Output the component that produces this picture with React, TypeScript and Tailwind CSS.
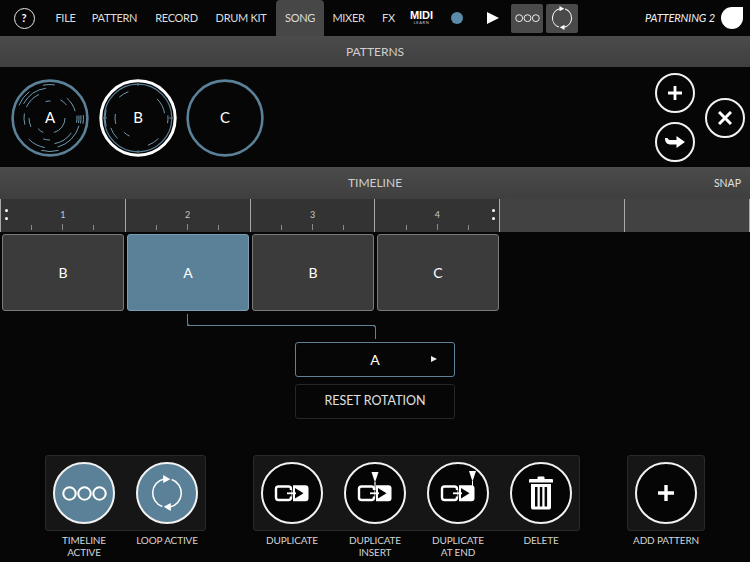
import React from "react";

const BLUE = "#5a8198";

function arc(r: number, a0: number, a1: number) {
  const p = (a: number) => {
    const t = ((a - 90) * Math.PI) / 180;
    return `${(r * Math.cos(t)).toFixed(2)} ${(r * Math.sin(t)).toFixed(2)}`;
  };
  return `M${p(a0)}A${r} ${r} 0 ${a1 - a0 > 180 ? 1 : 0} 1 ${p(a1)}`;
}

const arcsA: [number, number, number][] = [
  [33.5, -12, 8], [33.5, 85, 100], [33.5, 165, 195], [33.5, -68, -38],
  [31, 85, 100], [29, 85, 100], [27, 85, 100],
  [30, -62, -8], [30, 105, 165], [30, 190, 225],
  [26, -65, -25], [26, 40, 75], [26, 125, 170], [26, 255, 280],
  [21, 30, 52], [21, 245, 270], [22, 180, 198],
  [17, -15, 2], [15, 90, 165], [16, 205, 228],
];
const arcsB: [number, number, number][] = [
  [28, -42, -20], [27, 45, 80], [23, -105, -80], [33, -105, -75],
  [29, 225, 250], [20, 205, 225], [29, 135, 160], [30, 85, 100],
];

function PatternCircle({ label, variant }: { label: string; variant: "a" | "b" | "c" }) {
  const arcs = variant === "a" ? arcsA : variant === "b" ? arcsB : [];
  return (
    <div className="relative w-[78px] h-[78px] flex items-center justify-center text-white text-[15px]">
      <svg viewBox="-39 -39 78 78" className="absolute inset-0 w-full h-full" fill="none">
        {variant === "b" ? (
          <>
            <circle r="33.8" stroke={BLUE} strokeWidth="1.2" />
            <circle r="37.2" stroke="#fff" strokeWidth="3" />
            <path d="M0 -35V-32M0 32V35M-35 0H-31M31 0H35" stroke={BLUE} strokeWidth="1" />
          </>
        ) : (
          <circle r="37.4" stroke={BLUE} strokeWidth="2.6" />
        )}
        {arcs.map(([r, a, b], i) => (
          <path key={i} d={arc(r, a, b)} stroke="#6f97ad" strokeWidth="1" />
        ))}
      </svg>
      <span className="relative">{label}</span>
    </div>
  );
}

function LoopGlyph({ size, sw = 1.6 }: { size: number; sw?: number }) {
  return (
    <svg viewBox="-19 -19 38 38" width={size} height={size} fill="none">
      <path d="M-5 14.2A15 15 0 0 1 -3 -14.7" stroke="#fff" strokeWidth={sw} />
      <path d="M5 -14.2A15 15 0 0 1 3 14.7" stroke="#fff" strokeWidth={sw} />
      <path d="M-4 -19L3.5 -14.6L-4 -10.5Z" fill="#fff" />
      <path d="M4 19L-3.5 14.6L4 10.5Z" fill="#fff" />
    </svg>
  );
}

function RingsGlyph({ w, sw }: { w: number; sw: number }) {
  return (
    <svg viewBox="0 0 42 14" width={w} fill="none" stroke="#fff" strokeWidth={sw}>
      <circle cx="7" cy="7" r="5.8" />
      <circle cx="21" cy="7" r="5.8" />
      <circle cx="35" cy="7" r="5.8" />
    </svg>
  );
}

function DupGlyph({ mark }: { mark?: "insert" | "end" }) {
  return (
    <svg viewBox="-22 -22 44 44" width="44" height="44" fill="none">
      <rect x="-16" y="-6.5" width="15" height="13.5" rx="2.5" stroke="#fff" strokeWidth="2.4" />
      <path d="M1 -7.7H13.5a3 3 0 0 1 3 3V5.2a3 3 0 0 1 -3 3H1Z" fill="#fff" />
      <path d="M-3.5 -3H-.5V3.5H-3.5Z" fill="#050505" />
      <path d="M3 -5L11.5 0.3L3 5.5Z" fill="#050505" />
      <path d="M-5 .3H4" stroke="#fff" strokeWidth="1.8" />
      {mark === "insert" && (
        <>
          <path d="M-3.5 -21H3.5L0 -10.5Z" fill="#fff" />
          <path d="M0 -11V-3" stroke="#fff" strokeWidth="1.2" />
        </>
      )}
      {mark === "end" && (
        <>
          <path d="M11 -22H18L14.5 -11.5Z" fill="#fff" />
          <path d="M14.5 -12V-7" stroke="#fff" strokeWidth="1" />
        </>
      )}
    </svg>
  );
}

function TrashGlyph() {
  return (
    <svg viewBox="0 0 24 34" width="24" height="34">
      <path d="M8.5 3V1.3A1 1 0 0 1 9.5 .5H14.5A1 1 0 0 1 15.5 1.3V3H23A1 1 0 0 1 24 4V6.5H0V4A1 1 0 0 1 1 3Z" fill="#fff" />
      <path fillRule="evenodd" d="M2 8H22V31.5A2 2 0 0 1 20 33.5H4A2 2 0 0 1 2 31.5ZM6 11V30.5H8.5V11ZM10.8 11V30.5H13.3V11ZM15.6 11V30.5H18.1V11Z" fill="#fff" />
    </svg>
  );
}

function Plus({ size, sw }: { size: number; sw: number }) {
  return (
    <svg viewBox="0 0 16 16" width={size} height={size} stroke="#fff" strokeWidth={sw}>
      <path d="M8 0V16M0 8H16" />
    </svg>
  );
}

function RoundBtn({ children, active }: { children: React.ReactNode; active?: boolean }) {
  return (
    <div
      className={`w-[62px] h-[62px] rounded-full border-2 border-[#f2f2f2] flex items-center justify-center ${
        active ? "bg-[#5a8198]" : "bg-[#050505]"
      }`}
    >
      {children}
    </div>
  );
}

function SmallBtn({ children }: { children: React.ReactNode }) {
  return (
    <div className="w-[40px] h-[40px] rounded-full border-2 border-[#f2f2f2] flex items-center justify-center">
      {children}
    </div>
  );
}

function Group({ items }: { items: { icon: React.ReactNode; label: string[]; active?: boolean }[] }) {
  return (
    <div className="flex flex-col">
      <div className="flex gap-[21px] h-[76px] items-center pl-[7px] pr-[7px] bg-[#161616] border border-[#2a2a2a] rounded-[3px] box-border">
        {items.map((it, i) => (
          <RoundBtn key={i} active={it.active}>
            {it.icon}
          </RoundBtn>
        ))}
      </div>
      <div className="flex gap-[21px] pl-[8px] pt-[3px]">
        {items.map((it, i) => (
          <div key={i} className="w-[62px] flex flex-col items-center text-[10px] tracking-[-0.15px] leading-[12px] text-[#d4d4d4] whitespace-nowrap">
            {it.label.map((l) => (
              <span key={l}>{l}</span>
            ))}
          </div>
        ))}
      </div>
    </div>
  );
}

function MenuItem({ w, children, active }: { w: string; children: React.ReactNode; active?: boolean }) {
  return (
    <div className={`${w} h-[36px] flex items-center justify-center ${active ? "bg-[#474747] rounded-t-[4px]" : ""}`}>
      {children}
    </div>
  );
}

function RulerCell({ n, dots }: { n?: number; dots?: "l" | "r" }) {
  return (
    <div
      className={`relative w-[125px] h-[33px] box-border border-l border-[#a8a8a8] flex flex-col items-center ${
        n ? "bg-[#333333]" : "bg-[#424242]"
      }`}
    >
      {n && (
        <>
          <span className="text-[9px] leading-[10px] mt-[11px] text-[#c8c8c8]">{n}</span>
          <div className="flex justify-between items-end w-[63px] h-[6px] mt-[4px]">
            <i className="w-px h-[5px] bg-[#8a8a8a]" />
            <i className="w-px h-[6px] bg-[#8a8a8a]" />
            <i className="w-px h-[5px] bg-[#8a8a8a]" />
          </div>
        </>
      )}
      {dots && (
        <div className={`absolute top-[10px] flex flex-col gap-[5px] ${dots === "l" ? "left-[4px]" : "right-[4px]"}`}>
          <i className="w-[3px] h-[3px] rounded-full bg-white" />
          <i className="w-[3px] h-[3px] rounded-full bg-white" />
        </div>
      )}
    </div>
  );
}

function Clip({ label, active }: { label: string; active?: boolean }) {
  return (
    <div
      className={`w-[122px] h-[77px] rounded-[3px] border flex items-center justify-center text-white text-[14px] box-border ${
        active ? "bg-[#5a8198] border-[#7d9db0]" : "bg-[#3b3b3b] border-[#7a7a7a]"
      }`}
    >
      {label}
    </div>
  );
}

function SectionBar({ children, side, h }: { children: string; side?: string; h: string }) {
  return (
    <div className={`${h} shrink-0 flex items-center bg-linear-to-b from-[#4b4b4b] to-[#3f3f3f] text-[12px] text-[#cfcfcf]`}>
      <div className="flex-1" />
      <span>{children}</span>
      <div className="flex-1 flex justify-end text-[10.5px] text-[#e0e0e0]">
        <span className="mr-[9px] mt-[1px]">{side}</span>
      </div>
    </div>
  );
}

export default function App() {
  return (
    <div className="w-[750px] h-[562px] overflow-hidden bg-[#060606] flex flex-col [font-family:Lato,sans-serif]">
      {/* top menu */}
      <div className="h-[36px] flex items-center text-[11px] tracking-[-0.3px] text-[#dcdcdc] shrink-0">
        <div className="w-[47px] flex justify-center pl-px">
          <div className="w-[21px] h-[21px] rounded-full border border-[#e8e8e8] flex items-center justify-center text-[11px] font-bold text-white">?</div>
        </div>
        <MenuItem w="w-[37px]">FILE</MenuItem>
        <MenuItem w="w-[61px]">PATTERN</MenuItem>
        <MenuItem w="w-[63px]">RECORD</MenuItem>
        <MenuItem w="w-[66px]">DRUM KIT</MenuItem>
        <div className="w-[2px]" />
        <MenuItem w="w-[48px]" active>SONG</MenuItem>
        <MenuItem w="w-[49px]">MIXER</MenuItem>
        <MenuItem w="w-[31px]">FX</MenuItem>
        <div className="w-[35px] flex flex-col items-center text-white mt-[-1px]">
          <span className="text-[11px] leading-[10px] font-black tracking-[0px] [font-family:'Liberation_Sans',sans-serif]">MIDI</span>
          <span className="text-[4px] leading-[5px] tracking-[0.6px] text-[#ccc]">LEARN</span>
        </div>
        <div className="w-[12px] h-[12px] rounded-full bg-[#5a8ba8] ml-[12px]" />
        <svg viewBox="0 0 12 12" width="12" height="12" className="ml-[24px]">
          <path d="M0 0L12 6L0 12Z" fill="#fff" />
        </svg>
        <div className="w-[32px] h-[29px] ml-[12px] bg-[#4a4a4a] rounded-[2px] flex items-center justify-center">
          <RingsGlyph w={25} sw={1.5} />
        </div>
        <div className="w-[32px] h-[29px] ml-[3px] bg-[#4a4a4a] rounded-[2px] flex items-center justify-center">
          <LoopGlyph size={24} sw={1.6} />
        </div>
        <div className="flex-1 flex items-center justify-end pr-[7px]">
          <span className="italic text-[11px] tracking-[-0.1px] text-[#f0f0f0] mr-[6px]">PATTERNING 2</span>
          <div className="w-[22px] h-[22px] bg-white rounded-full rounded-tr-[3px]" />
        </div>
      </div>

      <SectionBar h="h-[31px]">PATTERNS</SectionBar>

      {/* patterns */}
      <div className="h-[99px] mt-px flex items-center shrink-0 pl-[11px]">
        <PatternCircle label="A" variant="a" />
        <div className="w-[10px]" />
        <PatternCircle label="B" variant="b" />
        <div className="w-[9px]" />
        <PatternCircle label="C" variant="c" />
        <div className="ml-auto flex items-center gap-[10px] pr-[5px]">
          <div className="flex flex-col gap-[9px]">
            <SmallBtn>
              <Plus size={14} sw={3.2} />
            </SmallBtn>
            <SmallBtn>
              <svg viewBox="0 0 20 14" width="20" height="14">
                <path d="M0 3L2.5 3C3 4.5 4 5 6 5H11.5V1L20 7L11.5 13V9.5H6C2 9.5 0 7.5 0 3Z" fill="#fff" />
              </svg>
            </SmallBtn>
          </div>
          <SmallBtn>
            <svg viewBox="0 0 14 14" width="14" height="14" stroke="#fff" strokeWidth="3">
              <path d="M1 1L13 13M13 1L1 13" />
            </svg>
          </SmallBtn>
        </div>
      </div>

      {/* timeline */}
      <SectionBar h="h-[32px]" side="SNAP">TIMELINE</SectionBar>
      <div className="flex shrink-0 h-[33px]">
        <RulerCell n={1} dots="l" />
        <RulerCell n={2} />
        <RulerCell n={3} />
        <RulerCell n={4} dots="r" />
        <RulerCell />
        <div className="border-r border-[#a8a8a8]">
          <RulerCell />
        </div>
      </div>

      {/* clips */}
      <div className="flex gap-[3px] pl-[2px] mt-[2px] shrink-0">
        <Clip label="B" />
        <Clip label="A" active />
        <Clip label="B" />
        <Clip label="C" />
      </div>

      {/* connector */}
      <div className="ml-[187px] mt-[3px] w-[188px] h-[12px] border-l border-b border-[#5f8296] rounded-bl-[3px] shrink-0" />
      <div className="ml-[187px] w-[189px] h-[14px] border-r border-t border-[#5f8296] -mt-px rounded-tr-[3px] shrink-0" />

      {/* selector */}
      <div className="ml-[295px] mt-[3px] w-[160px] flex flex-col gap-[7px] shrink-0">
        <div className="h-[35px] border border-[#5f8296] rounded-[3px] flex items-center justify-center relative text-white text-[14px] box-border">
          A
          <svg viewBox="0 0 6 6" width="6" height="6" className="absolute right-[17px] top-[13px]">
            <path d="M0 0L6 3L0 6Z" fill="#eee" />
          </svg>
        </div>
        <div className="h-[35px] border border-[#262626] rounded-[3px] flex items-center justify-center text-[#e0e0e0] text-[12.5px] box-border">
          RESET ROTATION
        </div>
      </div>

      {/* bottom controls */}
      <div className="flex items-start pl-[45px] mt-[36px] gap-[47px] shrink-0">
        <Group
          items={[
            { icon: <RingsGlyph w={45} sw={1.9} />, label: ["TIMELINE", "ACTIVE"], active: true },
            { icon: <LoopGlyph size={36} sw={1.6} />, label: ["LOOP ACTIVE"], active: true },
          ]}
        />
        <Group
          items={[
            { icon: <DupGlyph />, label: ["DUPLICATE"] },
            { icon: <DupGlyph mark="insert" />, label: ["DUPLICATE", "INSERT"] },
            { icon: <DupGlyph mark="end" />, label: ["DUPLICATE", "AT END"] },
            { icon: <TrashGlyph />, label: ["DELETE"] },
          ]}
        />
        <Group items={[{ icon: <Plus size={16} sw={3.4} />, label: ["ADD PATTERN"] }]} />
      </div>
    </div>
  );
}
